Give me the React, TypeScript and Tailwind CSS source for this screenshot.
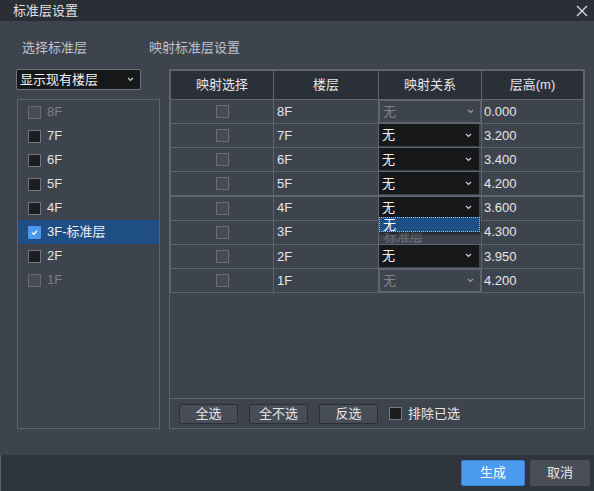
import React from "react";

const font = { fontFamily: '"Liberation Sans", "Noto Sans CJK SC", Arial, sans-serif' };

function Chevron({ color = "#c8ccd2" }: { color?: string }) {
  return (
    <svg width="7" height="5" viewBox="0 0 7 5" className="shrink-0">
      <path d="M1 1 L3.5 3.5 L6 1" fill="none" stroke={color} strokeWidth="1.2" />
    </svg>
  );
}

function ListCheck({ state }: { state: "off" | "dis" | "on" }) {
  if (state === "on")
    return (
      <div className="w-[13px] h-[13px] bg-[#4a9af0] rounded-[1px] flex items-center justify-center">
        <svg width="9" height="9" viewBox="0 0 9 9">
          <path d="M2 4.6 L3.8 6.3 L7 2.8" fill="none" stroke="#fff" strokeWidth="1.3" />
        </svg>
      </div>
    );
  if (state === "dis")
    return <div className="w-[13px] h-[13px] bg-[#474c55] border border-[#676c74]" />;
  return <div className="w-[13px] h-[13px] bg-[#1c1d20] border border-[#74787f]" />;
}

const leftItems: { label: string; state: "off" | "dis" | "on" }[] = [
  { label: "8F", state: "dis" },
  { label: "7F", state: "off" },
  { label: "6F", state: "off" },
  { label: "5F", state: "off" },
  { label: "4F", state: "off" },
  { label: "3F-标准层", state: "on" },
  { label: "2F", state: "off" },
  { label: "1F", state: "dis" },
];

const rows: { floor: string; map: "dis" | "on" | "open"; h: string }[] = [
  { floor: "8F", map: "dis", h: "0.000" },
  { floor: "7F", map: "on", h: "3.200" },
  { floor: "6F", map: "on", h: "3.400" },
  { floor: "5F", map: "on", h: "4.200" },
  { floor: "4F", map: "on", h: "3.600" },
  { floor: "3F", map: "open", h: "4.300" },
  { floor: "2F", map: "on", h: "3.950" },
  { floor: "1F", map: "dis", h: "4.200" },
];

function MapCell({ kind }: { kind: "dis" | "on" | "open" }) {
  if (kind === "on")
    return (
      <div className="bg-[#3e444e] h-[23px] pr-[2px] pb-[1px]">
        <div className="h-full bg-[#17181a] flex items-center justify-between pl-[3px] pr-[7px] text-[13px] text-[#f2f2f2]">
          <span>无</span>
          <Chevron />
        </div>
      </div>
    );
  if (kind === "dis")
    return (
      <div className="bg-[#3e444e] h-[23px] border border-[#5f656e] flex items-center justify-between pl-[3px] pr-[6px] text-[13px] text-[#80858c]">
        <span>无</span>
        <Chevron color="#9a9ea5" />
      </div>
    );
  return (
    <div className="relative bg-[#3e444e] h-[23px] overflow-visible text-[13px] text-[#6f747b]">
      <div className="h-[23px] overflow-hidden pl-[5px] pt-[8px] leading-[15px]">标准层</div>
      <div className="absolute left-0 top-[-4px] w-[101px] h-[15px] bg-[#1f4e85] border border-dotted border-[#e0b060] shadow-[1px_2px_3px_rgba(0,0,0,0.5)] flex items-center pl-[3px] text-[13px] text-white leading-none">
        无
      </div>
    </div>
  );
}

function TableCheck() {
  return <div className="w-[13px] h-[13px] bg-[#454b54] border border-[#6b7078]" />;
}

function Btn({ children, w }: { children: React.ReactNode; w: string }) {
  return (
    <div className={`${w} h-[20px] bg-[#474d56] border border-[#2b2f35] rounded-[2px] flex items-center justify-center text-[13px] text-[#e6e6e6]`}>
      {children}
    </div>
  );
}

export default function App() {
  return (
    <div style={font} className="w-[594px] h-[491px] bg-[#3e444e] flex flex-col overflow-hidden">
      {/* title */}
      <div className="h-[21px] bg-[#2a2e35] flex items-center justify-between pl-[13px] pr-[6px] shrink-0">
        <span className="text-[13px] text-[#e2e2e2]">标准层设置</span>
        <svg width="12" height="12" viewBox="0 0 12 12">
          <path d="M1 1 L11 11 M11 1 L1 11" stroke="#d8dbe0" strokeWidth="1.4" />
        </svg>
      </div>

      {/* body */}
      <div className="flex-1 flex flex-col">
        <div className="h-[48px] flex items-center pt-[6px] text-[13px] text-[#bfc3c9]">
          <span className="ml-[22px]">选择标准层</span>
          <span className="ml-[62px]">映射标准层设置</span>
        </div>
        <div className="flex">
          {/* left */}
          <div className="flex flex-col ml-[16px] w-[144px]">
            <div className="w-[125px] h-[21px] bg-[#17181a] border border-[#70757c] rounded-[2px] flex items-center justify-between pl-[3px] pr-[6px] text-[13px] text-[#f2f2f2]">
              <span>显示现有楼层</span>
              <Chevron />
            </div>
            <div className="mt-[9px] ml-[1px] w-[143px] h-[330px] border border-[#5f656e] flex flex-col">
              {leftItems.map((it) => (
                <div
                  key={it.label}
                  className={`h-[24px] flex items-center gap-[6px] pl-[10px] text-[13px] ${
                    it.state === "on" ? "bg-[#1f4e85] text-[#eef2f7]" : it.state === "dis" ? "text-[#7b8088]" : "text-[#e2e2e2]"
                  }`}
                >
                  <ListCheck state={it.state} />
                  <span>{it.label}</span>
                </div>
              ))}
            </div>
          </div>

          {/* right */}
          <div className="ml-[9px] w-[416px] h-[360px] border border-[#5f656e] flex flex-col">
            <div className="grid grid-cols-[102px_104px_102px_101px] gap-[1px] p-[1px] pr-0 bg-[#5f656e] w-[414px] h-[223px]">
              {["映射选择", "楼层", "映射关系", "层高(m)"].map((h) => (
                <div key={h} className="h-[28px] bg-[#2b3038] flex items-center justify-center text-[13px] text-[#e6e6e6]">
                  {h}
                </div>
              ))}
              {rows.map((r) => (
                <React.Fragment key={r.floor}>
                  <div className="h-[23px] bg-[#3e444e] flex items-center justify-center">
                    <TableCheck />
                  </div>
                  <div className="h-[23px] bg-[#3e444e] flex items-center pl-[3px] text-[13px] text-[#e6e6e6]">{r.floor}</div>
                  <MapCell kind={r.map} />
                  <div className="h-[23px] bg-[#3e444e] flex items-center pl-[2px] text-[13px] text-[#e6e6e6]">{r.h}</div>
                </React.Fragment>
              ))}
            </div>
            <div className="flex-1" />
            <div className="h-[30px] border-t border-[#5f656e] flex items-center pl-[9px] gap-[11px]">
              <Btn w="w-[59px]">全选</Btn>
              <Btn w="w-[59px]">全不选</Btn>
              <Btn w="w-[59px]">反选</Btn>
              <div className="flex items-center gap-[6px] text-[13px] text-[#e6e6e6]">
                <div className="w-[13px] h-[13px] bg-[#1c1d20] border border-[#74787f]" />
                <span>排除已选</span>
              </div>
            </div>
          </div>
        </div>
      </div>

      {/* footer */}
      <div className="h-[36px] bg-[#2e353d] shrink-0 flex items-center justify-end gap-[5px] pr-[4px] border-l border-[#55606e]">
        <div className="w-[64px] h-[26px] bg-[#4a9af0] border border-[#3a7fd0] rounded-[2px] flex items-center justify-center text-[13px] text-white">
          生成
        </div>
        <div className="w-[60px] h-[26px] bg-[#4a4f57] rounded-[2px] flex items-center justify-center text-[13px] text-[#e6e6e6]">
          取消
        </div>
      </div>
    </div>
  );
}
